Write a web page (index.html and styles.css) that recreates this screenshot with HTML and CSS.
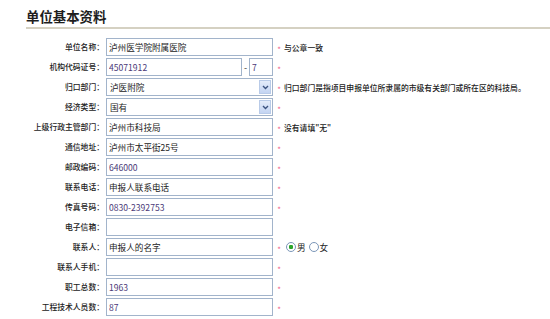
FILE: index.html
```html
<!DOCTYPE html>
<html lang="zh-CN">

<head>
    <meta charset="UTF-8">
    <title>单位基本资料</title>
    <link rel="stylesheet" href="styles.css">
</head>

<body>
    <div class="title">单位基本资料</div>
    <form class="unit-form">
        <label>单位名称：</label>
        <div class="field">
            <input type="text" class="txt" value="泸州医学院附属医院">
            <span class="star">*</span><span class="note">与公章一致</span>
        </div>

        <label>机构代码证号：</label>
        <div class="field">
            <input type="text" class="txt code num" value="45071912">
            <span class="dash">-</span>
            <input type="text" class="txt check num" value="7">
            <span class="star">*</span>
        </div>

        <label>归口部门：</label>
        <div class="field">
            <div class="select"><span class="sel-text">泸医附院</span><span class="sel-btn"><svg width="7" height="5" viewBox="0 0 7 5"><path d="M1 1l2.5 2.5L6 1" fill="none" stroke="#3d5480" stroke-width="1.4"/></svg></span></div>
            <span class="star">*</span><span class="note">归口部门是指项目申报单位所隶属的市级有关部门或所在区的科技局。</span>
        </div>

        <label>经济类型：</label>
        <div class="field">
            <div class="select"><span class="sel-text">国有</span><span class="sel-btn"><svg width="7" height="5" viewBox="0 0 7 5"><path d="M1 1l2.5 2.5L6 1" fill="none" stroke="#3d5480" stroke-width="1.4"/></svg></span></div>
            <span class="star">*</span>
        </div>

        <label>上级行政主管部门：</label>
        <div class="field">
            <input type="text" class="txt" value="泸州市科技局">
            <span class="star">*</span><span class="note">没有请填"无"</span>
        </div>

        <label>通信地址：</label>
        <div class="field">
            <input type="text" class="txt" value="泸州市太平街25号">
            <span class="star">*</span>
        </div>

        <label>邮政编码：</label>
        <div class="field">
            <input type="text" class="txt num" value="646000">
            <span class="star">*</span>
        </div>

        <label>联系电话：</label>
        <div class="field">
            <input type="text" class="txt" value="申报人联系电话">
            <span class="star">*</span>
        </div>

        <label>传真号码：</label>
        <div class="field">
            <input type="text" class="txt num" value="0830-2392753">
            <span class="star">*</span>
        </div>

        <label>电子信箱：</label>
        <div class="field">
            <input type="text" class="txt" value="">
        </div>

        <label>联系人：</label>
        <div class="field">
            <input type="text" class="txt" value="申报人的名字">
            <span class="star">*</span>
            <input type="radio" name="sex" class="radio" checked><span class="opt">男</span>
            <input type="radio" name="sex" class="radio"><span class="opt">女</span>
        </div>

        <label>联系人手机：</label>
        <div class="field">
            <input type="text" class="txt" value="">
            <span class="star">*</span>
        </div>

        <label>职工总数：</label>
        <div class="field">
            <input type="text" class="txt num" value="1963">
            <span class="star">*</span>
        </div>

        <label>工程技术人员数：</label>
        <div class="field">
            <input type="text" class="txt num" value="87">
            <span class="star">*</span>
        </div>
    </form>
</body>

</html>
```

FILE: styles.css
```css
body {
    margin: 0;
    background: #fff;
    font-family: "Noto Sans CJK SC", "Liberation Sans", sans-serif;
    color: #222;
}

.title {
    margin-left: 26px;
    padding-top: 8px;
    height: 19px;
    line-height: 16px;
    font-size: 13.4px;
    font-weight: bold;
    color: #1e1e1e;
    border-bottom: 2px solid #d5d1c2;
}

.unit-form {
    display: grid;
    grid-template-columns: 104px 1fr;
    grid-auto-rows: 18px;
    row-gap: 2px;
    column-gap: 2px;
    margin-top: 9px;
}

.unit-form label {
    text-align: right;
    font-size: 7.8px;
    font-weight: 500;
    line-height: 18px;
    color: #222;
}

.field {
    display: flex;
    align-items: center;
    height: 18px;
}

.txt {
    box-sizing: border-box;
    width: 167px;
    height: 18px;
    margin: 0;
    padding: 0 2px;
    border: 1px solid #a2b4cb;
    font-family: inherit;
    font-size: 8.6px;
    color: #222;
    outline: none;
}

.num {
    color: #4b3a78;
}

.code {
    width: 136px;
}

.dash {
    width: 7px;
    text-align: center;
    font-size: 9px;
    color: #333;
}

.check {
    width: 24px;
}

.select {
    box-sizing: border-box;
    display: flex;
    align-items: center;
    width: 167px;
    height: 18px;
    border: 1px solid #a2b4cb;
    font-size: 8.6px;
    color: #222;
}

.sel-text {
    flex: 1;
    padding-left: 3px;
}

.sel-btn {
    box-sizing: border-box;
    display: flex;
    align-items: center;
    justify-content: center;
    width: 12px;
    height: 14px;
    margin-right: 1px;
    border: 1px solid #b9cbe8;
    background: linear-gradient(#e4ecfa, #c3d4f2);
}

.star {
    width: 8px;
    margin-left: 2px;
    padding-top: 5px;
    text-align: center;
    font-size: 8px;
    line-height: 8px;
    color: #f0608a;
}

.note {
    margin-left: 1px;
    font-size: 7.8px;
    font-weight: 500;
    color: #222;
}

.radio {
    appearance: none;
    box-sizing: border-box;
    width: 10px;
    height: 10px;
    margin: 0 1px 0 3px;
    border: 1.5px solid #7b96b8;
    border-radius: 50%;
    background: #fff;
}

.radio:checked {
    background: radial-gradient(circle, #2ba52b 0 2px, #fff 2.4px);
}

.opt {
    font-size: 8.6px;
    color: #222;
}
```
